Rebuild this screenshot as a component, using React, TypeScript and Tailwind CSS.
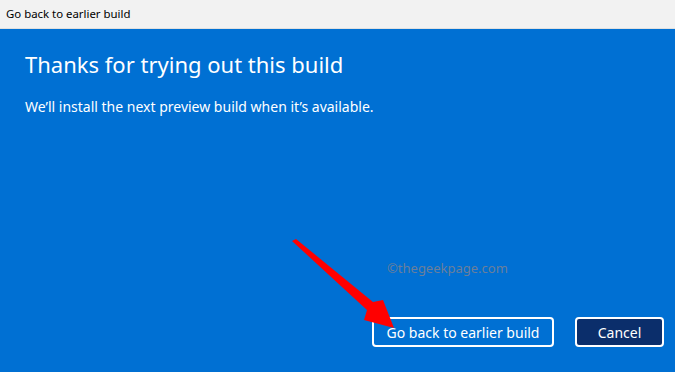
import React from "react";

export default function App() {
  return (
    <div className="relative w-[675px] h-[372px] overflow-hidden flex flex-col" style={{ fontFamily: '"Noto Sans", "Open Sans", sans-serif' }}>
      <div className="h-[29px] bg-[#f2f2f2] flex items-center pl-[6px] text-[11.4px] text-black border-b border-[#e0e0e0]">
        Go back to earlier build
      </div>
      <div className="flex-1 bg-[#0070d3] flex flex-col px-[25px] pt-[20px] pb-[25px] text-white">
        <h1 className="text-[22px] leading-[30px] font-normal">Thanks for trying out this build</h1>
        <p className="mt-[18px] text-[14px] leading-[20px]">We’ll install the next preview build when it’s available.</p>
        <div className="flex-1" />
        <div className="flex justify-end gap-[21px] -mr-[14px]">
          <button className="w-[182px] h-[30px] rounded-[4px] border-2 border-white text-[14px] text-white">Go back to earlier build</button>
          <button className="w-[89px] h-[30px] rounded-[4px] border-2 border-white bg-[#0b2e6b] text-[14px] text-white">Cancel</button>
        </div>
      </div>
      <div className="absolute left-[387px] top-[259px] text-[13px] text-[#6b7f9a]">©thegeekpage.com</div>
      <svg className="absolute left-0 top-0 pointer-events-none" width="675" height="372">
        <polygon points="292,241 296,239 373,302 383,300 394,328 364,320 367,310" fill="#ff0000" />
      </svg>
    </div>
  );
}
